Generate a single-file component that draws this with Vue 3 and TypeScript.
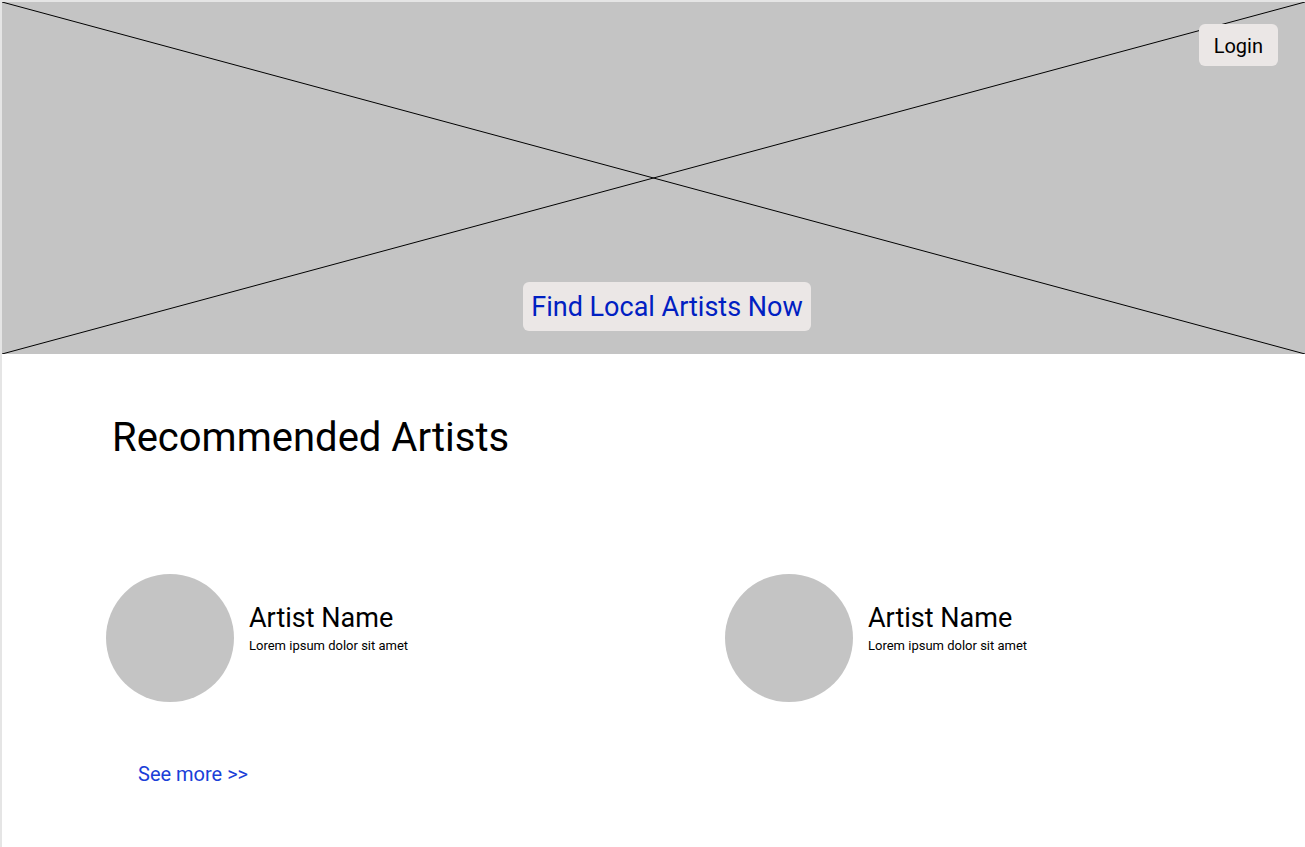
<script setup lang="ts">
interface Artist {
  id: number
  name: string
  blurb: string
}

const artists: Artist[] = [
  { id: 1, name: 'Artist Name', blurb: 'Lorem ipsum dolor sit amet' },
  { id: 2, name: 'Artist Name', blurb: 'Lorem ipsum dolor sit amet' },
]
</script>

<template>
  <div class="page">
    <header class="hero">
      <svg class="hero-image" viewBox="0 0 100 100" preserveAspectRatio="none" aria-hidden="true">
        <line x1="0" y1="0" x2="100" y2="100" />
        <line x1="0" y1="100" x2="100" y2="0" />
      </svg>
      <nav class="top-bar">
        <button type="button" class="btn login">Login</button>
      </nav>
      <div class="cta">
        <button type="button" class="btn find">Find Local Artists Now</button>
      </div>
    </header>

    <main class="content">
      <h1>Recommended Artists</h1>
      <ul class="artists">
        <li v-for="artist in artists" :key="artist.id" class="artist">
          <div class="avatar"></div>
          <div class="details">
            <h2>{{ artist.name }}</h2>
            <p>{{ artist.blurb }}</p>
          </div>
        </li>
      </ul>
      <a href="#" class="more">See more &gt;&gt;</a>
    </main>
  </div>
</template>

<style>
body {
  margin: 0;
  background: #fff;
}
</style>

<style scoped>
.page {
  box-sizing: border-box;
  min-height: 100vh;
  border-top: 2px solid #e5e5e5;
  border-left: 2px solid #e5e5e5;
  font-family: Roboto, 'Liberation Sans', sans-serif;
  color: #000;
}

.hero {
  position: relative;
  box-sizing: border-box;
  min-height: 352px;
  padding: 22px 0 23px 27px;
  display: flex;
  flex-direction: column;
  justify-content: space-between;
  background: #c4c4c4;
}

.hero-image {
  position: absolute;
  inset: 0;
  width: 100%;
  height: 100%;
}

.hero-image line {
  stroke: #000;
  stroke-width: 1px;
  vector-effect: non-scaling-stroke;
}

.top-bar {
  position: relative;
  display: flex;
  justify-content: flex-end;
  padding-right: 27px;
}

.cta {
  position: relative;
  display: flex;
  justify-content: center;
}

.btn {
  border: 0;
  border-radius: 6px;
  background: #ebe7e6;
  font-family: inherit;
  cursor: pointer;
}

.login {
  padding: 10px 15px 8px;
  font-size: 20px;
  line-height: 24px;
  color: #000;
}

.find {
  padding: 10px 8px 8px;
  font-size: 27px;
  line-height: 31px;
  color: #0020c2;
}

.content {
  padding: 60px 41px 60px 104px;
}

h1 {
  margin: 0 0 112px 6px;
  font-size: 40px;
  line-height: 48px;
  font-weight: 400;
}

.artists {
  display: grid;
  grid-template-columns: 1fr 1fr;
  gap: 80px;
  margin: 0 0 60px;
  padding: 0;
  list-style: none;
}

.artist {
  display: flex;
  align-items: flex-start;
  gap: 15px;
}

.avatar {
  flex: none;
  width: 128px;
  height: 128px;
  border-radius: 50%;
  background: #c4c4c4;
}

.details {
  padding-top: 28px;
}

h2 {
  margin: 0 0 4px;
  font-size: 27px;
  line-height: 32px;
  font-weight: 400;
}

p {
  margin: 0;
  font-size: 13px;
  line-height: 16px;
}

.more {
  display: inline-block;
  margin-left: 32px;
  font-size: 20px;
  line-height: 24px;
  color: #1a40d8;
  text-decoration: none;
}
</style>
